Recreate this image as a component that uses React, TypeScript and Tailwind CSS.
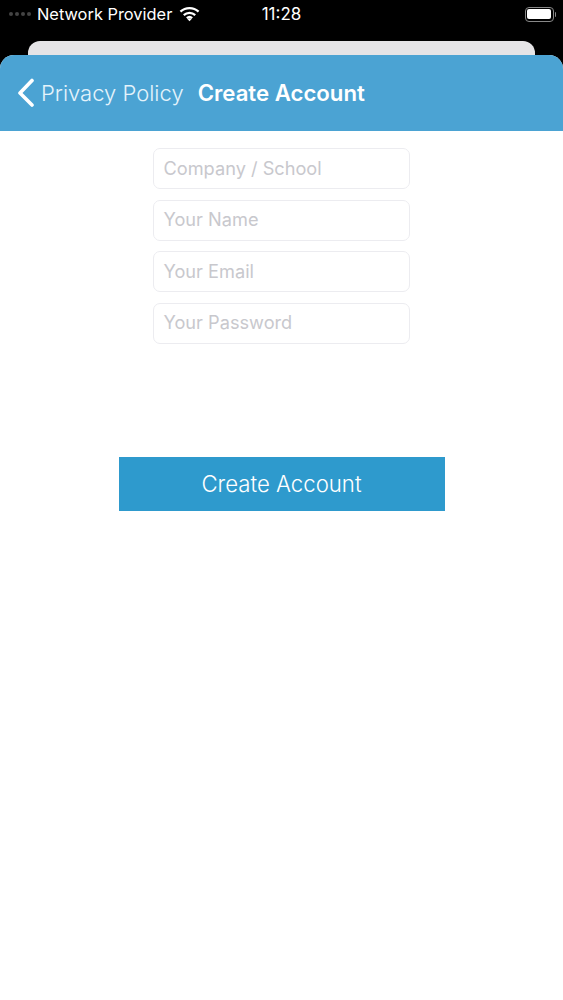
const fields = ["Company / School", "Your Name", "Your Email", "Your Password"];

function Wifi() {
  return (
    <svg width="21" height="16" viewBox="0 0 22 16" fill="none" stroke="#fff" strokeWidth="2.4">
      <path d="M1.5 5.6C6.9 0.6 15.1 0.6 20.5 5.6" />
      <path d="M5 9.2C8.4 6.1 13.6 6.1 17 9.2" />
      <path d="M8.2 12.4C9.8 11 12.2 11 13.8 12.4" />
      <path d="M11 15.6L8.8 13.3C10 12.3 12 12.3 13.2 13.3Z" fill="#fff" stroke="none" />
    </svg>
  );
}

export default function App() {
  return (
    <div className="flex h-[1000px] w-[563px] flex-col overflow-hidden bg-black font-['Inter','Liberation_Sans',sans-serif]">
      <div className="flex h-[41px] shrink-0 items-start justify-between text-white">
        <div className="flex h-[28px] items-center pl-[9px]">
          <div className="mr-[6px] flex gap-[2px]">
            <span className="h-[4px] w-[4px] rounded-full bg-[#444]" />
            <span className="h-[4px] w-[4px] rounded-full bg-[#444]" />
            <span className="h-[4px] w-[4px] rounded-full bg-[#444]" />
            <span className="h-[4px] w-[4px] rounded-full bg-[#444]" />
          </div>
          <span className="text-[16.4px] leading-none">Network Provider</span>
          <span className="ml-[7px]"><Wifi /></span>
        </div>
        <span className="absolute left-0 right-0 top-[5px] text-center text-[17px] leading-[18px]">11:28</span>
        <div className="flex h-[28px] items-center pr-[7px]">
          <div className="h-[15px] w-[29px] rounded-[4px] border border-[#888] p-[1.5px]">
            <div className="h-full w-full rounded-[2px] bg-white" />
          </div>
          <div className="ml-[1px] h-[5px] w-[1.5px] rounded-r bg-[#888]" />
        </div>
      </div>
      <div className="mx-[28px] h-[14px] shrink-0 rounded-t-[12px] bg-[#e5e4e6]" />
      <div className="flex min-h-0 flex-1 flex-col overflow-hidden rounded-t-[14px] bg-white">
        <header className="flex h-[76px] shrink-0 items-center bg-[#4ba3d3] text-white">
          <svg className="ml-[17px]" width="18" height="30" viewBox="0 0 18 30" fill="none" stroke="#fff" strokeWidth="3.6" strokeLinecap="round" strokeLinejoin="round">
            <path d="M15 2.5L3 15L15 27" />
          </svg>
          <span className="ml-[6px] text-[22px] font-light leading-none text-[#e4f3fb]">Privacy Policy</span>
          <span className="ml-[14px] text-[22.2px] font-semibold leading-none">Create Account</span>
        </header>
        <main className="flex flex-col items-center pt-[17px]">
          <div className="flex w-[257px] flex-col gap-[10.5px]">
            {fields.map((field) => (
              <div key={field} className="flex h-[41px] items-center rounded-[7px] border border-[#ececf0] pl-[9.5px] text-[18.2px] font-normal text-[#c8c8cd]">
                {field}
              </div>
            ))}
          </div>
          <button className="mt-[113px] h-[54px] w-[326px] bg-[#2e9acd] pt-[1px] text-[22.2px] font-light text-white">
            Create Account
          </button>
        </main>
      </div>
    </div>
  );
}
